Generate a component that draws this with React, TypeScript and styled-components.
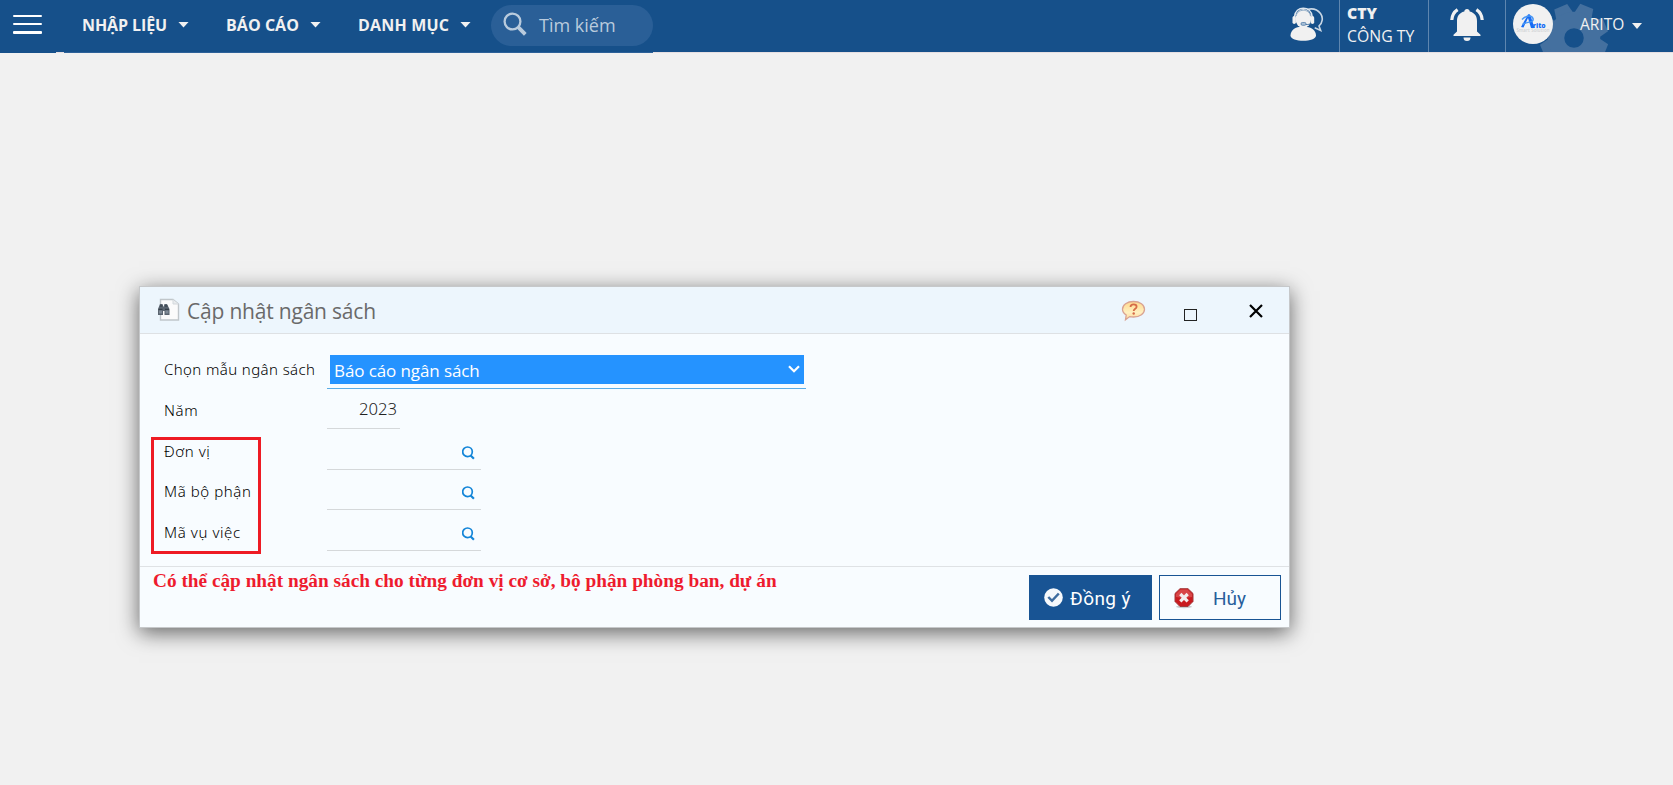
import React from "react";
import styled, { createGlobalStyle } from "styled-components";

const sans = `"Open Sans", "Noto Sans", sans-serif`;
const light = `"Noto Sans", "Open Sans", sans-serif`;

const GlobalStyle = createGlobalStyle`
  * { box-sizing: border-box; }
  body {
    margin: 0;
    background: #f1f1f1;
    font-family: ${sans};
    overflow: hidden;
  }
`;

const Page = styled.div`
  display: flex;
  flex-direction: column;
  height: 785px;
`;

const TopBar = styled.header`
  display: flex;
  height: 52px;
  flex: none;
  background: #16508a;
  color: #f1f1f1;
`;

const TopBarEdge = styled.div`
  display: flex;
  height: 1px;
  flex: none;
  background: #e6dfe2;
`;

const EdgeSegment = styled.span<{ $width: number; $color: string }>`
  width: ${(p) => p.$width}px;
  background: ${(p) => p.$color};
`;

const MenuToggle = styled.button`
  display: flex;
  flex-direction: column;
  flex: none;
  gap: 6px;
  width: 82px;
  padding: 15px 0 0 13px;
  border: 0;
  background: none;
`;

const ToggleLine = styled.span<{ $thick?: boolean }>`
  width: 29px;
  height: ${(p) => (p.$thick ? 3 : 2)}px;
  border-radius: 1px;
  background: #fff;
`;

const Nav = styled.nav`
  display: flex;
  flex: none;
  width: 409px;
`;

const NavItem = styled.a<{ $width: number; $spacing: number }>`
  display: flex;
  flex: none;
  align-items: center;
  justify-content: space-between;
  width: ${(p) => p.$width}px;
  height: 50px;
  margin-right: 37px;
  font-size: 16px;
  font-weight: 700;
  letter-spacing: ${(p) => p.$spacing}px;
  white-space: nowrap;

  &:last-child {
    margin-right: 0;
  }
`;

const Caret = styled.span`
  width: 11px;
  height: 6px;
  margin-top: -1px;
  background: #f1f1f1;
  clip-path: polygon(0 0, 100% 0, 50% 100%);
`;

const SearchPill = styled.div`
  display: flex;
  align-items: center;
  width: 162px;
  height: 41px;
  margin-top: 5px;
  padding: 0 0 2px 12px;
  gap: 12px;
  border-radius: 21px;
  background: #2a5f97;
  color: #b9cbdd;
  font-size: 18px;
  white-space: nowrap;
  line-height: 38px;
`;

const SearchIcon = styled.svg`
  flex: none;
  margin-top: -1px;
`;

const Tools = styled.div`
  display: flex;
  margin-left: auto;
`;

const ToolCell = styled.div<{ $width: number }>`
  display: flex;
  width: ${(p) => p.$width}px;
  padding-top: 7px;
  justify-content: center;
  border-right: 1px solid #5e86af;
`;

const Company = styled.div`
  width: 89px;
  padding: 2px 0 0 7px;
  border-right: 1px solid #5e86af;
  font-size: 15.8px;
  line-height: 24px;
  white-space: nowrap;
`;

const CompanyCode = styled.div`
  font-weight: 800;
  line-height: 22px;
`;

const Account = styled.div`
  position: relative;
  display: flex;
  width: 167px;
  overflow: hidden;
`;

const Avatar = styled.div`
  position: relative;
  width: 40px;
  height: 40px;
  margin: 4px 0 0 7px;
  border-radius: 50%;
  overflow: hidden;
  background: #f1f1f1;
`;

const Gear = styled.svg`
  position: absolute;
  left: 32px;
  top: 3px;
`;

const AccountName = styled.span`
  position: relative;
  width: 52px;
  margin-left: 27px;
  font-size: 15.5px;
  line-height: 49px;
`;

const AccountCaret = styled(Caret)`
  position: relative;
  width: 10px;
  margin: 23px 0 0 0;
`;

const Desktop = styled.main`
  flex: 1;
  padding: 233px 0 0 139px;
`;

const Dialog = styled.section`
  position: relative;
  display: flex;
  flex-direction: column;
  width: 1151px;
  height: 342px;
  border: 1px solid #c6c8ca;
  background: #f8fcff;
  box-shadow: 0 5px 20px rgba(0, 0, 0, 0.58);
`;

const TitleBar = styled.div`
  display: flex;
  height: 47px;
  flex: none;
  padding: 0 26px 0 17px;
  align-items: flex-start;
  border-bottom: 1px solid #dee1e4;
  background: #edf6fd;
`;

const DocIcon = styled.svg`
  margin-top: 11px;
  flex: none;
`;

const Title = styled.h1`
  flex: 1;
  margin: 0 0 0 7px;
  color: #6a6a6a;
  font-size: 21px;
  font-weight: 400;
  letter-spacing: -0.2px;
  line-height: 49px;
`;

const HelpIcon = styled.svg`
  margin: 12px 38px 0 0;
`;

const MaximizeButton = styled.button`
  width: 13px;
  height: 12px;
  margin: 22px 52px 0 0;
  padding: 0;
  border: 1px solid #222;
  background: none;
`;

const CloseIcon = styled.svg`
  margin-top: 16px;
`;

const Form = styled.div`
  height: 233px;
  flex: none;
  padding-left: 24px;
  border-bottom: 1px solid #dfe2e5;
`;

const Field = styled.div<{ $height: number }>`
  display: flex;
  align-items: flex-end;
  height: ${(p) => p.$height}px;
`;

const Label = styled.label<{ $raise?: number }>`
  width: 163px;
  padding-bottom: ${(p) => p.$raise ?? 9}px;
  color: #000;
  font-family: ${light};
  font-size: 15px;
  font-weight: 300;
  letter-spacing: ${(p) => (p.$raise ? 0.4 : 0.58)}px;
  line-height: 20px;
  white-space: nowrap;
`;

const SelectBox = styled.div`
  width: 479px;
  height: 34px;
  padding: 0 2px 0 3px;
  border-bottom: 1px solid #5aace6;
`;

const SelectValue = styled.div`
  display: flex;
  align-items: center;
  justify-content: space-between;
  height: 29px;
  padding: 2px 4px 0 4px;
  background: #2593ff;
  color: #fff;
  font-size: 17px;
  letter-spacing: -0.1px;
  line-height: 27px;
`;

const Chevron = styled.svg`
  margin-top: -4px;
`;

const YearInput = styled.div`
  width: 73px;
  height: 30px;
  padding-right: 3px;
  border-bottom: 1px solid #d5d8da;
  color: #222;
  font-family: ${light};
  font-size: 16.7px;
  font-weight: 300;
  line-height: 20px;
  text-align: right;
`;

const LookupInput = styled.div`
  display: flex;
  justify-content: flex-end;
  width: 154px;
  height: 24px;
  padding-right: 6px;
  border-bottom: 1px solid #d5d8da;
`;

const Footer = styled.footer`
  display: flex;
  justify-content: flex-end;
  gap: 7px;
  padding: 8px 8px 0 0;
`;

const ActionButton = styled.button<{ $primary?: boolean }>`
  display: flex;
  align-items: center;
  width: ${(p) => (p.$primary ? 123 : 122)}px;
  height: 45px;
  padding: 2px 0 0 14px;
  gap: ${(p) => (p.$primary ? 7 : 19)}px;
  border: 1px solid #185494;
  background: ${(p) => (p.$primary ? "#185494" : "#f8fcff")};
  color: ${(p) => (p.$primary ? "#fff" : "#285f9c")};
  font-family: Roboto, sans-serif;
  font-size: 19px;
  letter-spacing: ${(p) => (p.$primary ? 0.4 : 0)}px;

  svg {
    flex: none;
    margin-top: -1px;
  }
`;

const Highlight = styled.div`
  position: absolute;
  left: 11px;
  top: 150px;
  width: 110px;
  height: 117px;
  border: 3px solid #ee1b24;
`;

const Note = styled.div`
  position: absolute;
  left: 13px;
  top: 282px;
  color: #ee1b2e;
  font-family: "Liberation Serif", serif;
  font-size: 19.3px;
  font-weight: 700;
  line-height: 24px;
  white-space: nowrap;
`;

const Magnifier = () => (
  <svg width="13" height="14" viewBox="0 0 13 14" fill="none" stroke="#1385d8">
    <circle cx="5.500" cy="5.800" r="4.800" strokeWidth="1.700" />
    <path d="M8.400 9.200 11.900 12.700" strokeWidth="2.200" />
  </svg>
);

const lookups = [
  { label: "Đơn vị", height: 41 },
  { label: "Mã bộ phận", height: 40 },
  { label: "Mã vụ việc", height: 41 },
];

const menus = [
  { label: "NHẬP LIỆU", width: 107, spacing: -0.1 },
  { label: "BÁO CÁO", width: 95, spacing: 0.05 },
  { label: "DANH MỤC", width: 113, spacing: 0.2 },
];

const teeth = [22, 67, 112, 157, 202, 247, 292, 337];

export default function App() {
  return (
    <Page>
      <GlobalStyle />
      <TopBar>
        <MenuToggle aria-label="Menu">
          <ToggleLine />
          <ToggleLine />
          <ToggleLine $thick />
        </MenuToggle>
        <Nav>
          {menus.map((m) => (
            <NavItem key={m.label} $width={m.width} $spacing={m.spacing}>
              {m.label}
              <Caret />
            </NavItem>
          ))}
        </Nav>
        <SearchPill>
          <SearchIcon width="24" height="24" viewBox="0 0 24 24" fill="none" stroke="#b9cbdd">
            <circle cx="9.500" cy="9.500" r="7.900" strokeWidth="2.300" />
            <path d="M15.200 15.200 22.300 22.300" strokeWidth="3.800" />
          </SearchIcon>
          Tìm kiếm
        </SearchPill>
        <Tools>
          <ToolCell $width={66}>
            <svg width="34" height="36" viewBox="0 0 34 36">
              <path d="M17 2.500C22 1.200 27 2 30.500 6.500c3 4 2 9.500-1.500 12.500l1.700 4.500-6-2.700" fill="none" stroke="#c9d7e5" strokeWidth="1.600" />
              <path d="M.5 28.500C.5 23.500 5 20.500 9 20h8c4.500.5 9 3.500 9 8.500 0 7-25.500 7-25.500 0Z" fill="#f1f1f1" />
              <ellipse cx="13.300" cy="11.500" rx="7.900" ry="9.500" fill="#f1f1f1" />
              <path d="M4.500 10C5 4 9 1.300 13.300 1.300S21.800 4 22.200 10" fill="none" stroke="#dfe7ef" strokeWidth="1.600" />
              <path d="M6.200 9C6.800 5 10 3.300 13.300 3.300s6.500 1.700 7.200 5.700" fill="none" stroke="#7f9fbf" strokeWidth=".8" />
              <path d="M22 15.500c-1 1.800-3.500 2-6 2" fill="none" stroke="#42709f" strokeWidth=".9" />
              <rect x="2.500" y="9" width="3.400" height="8" rx="1.700" fill="#f1f1f1" />
              <rect x="20.800" y="9" width="3.400" height="8" rx="1.700" fill="#f1f1f1" />
              <rect x="11" y="15.500" width="5" height="2.800" rx="1.300" fill="#a9c0d7" stroke="#42709f" strokeWidth=".7" />
            </svg>
          </ToolCell>
          <Company>
            <CompanyCode>CTY</CompanyCode>
            CÔNG TY
          </Company>
          <ToolCell $width={77}>
            <svg width="34" height="35" viewBox="0 0 34 35" fill="#f1f1f1">
              <path d="M17 2c1.500 0 2.700 1 2.700 2.600C25 6 27 9.500 27 14v10.500l3.500 3.200V29h-27v-1.300L7 24.500V14c0-4.500 2-8 7.300-9.400C14.300 3 15.500 2 17 2ZM13.500 30.500h7a3.500 3.500 0 0 1-7 0Z" />
              <path d="M1.800 13C2 8.500 4 5 7.600 2.600M32.200 13C32 8.500 30 5 26.400 2.600" fill="none" stroke="#f1f1f1" strokeWidth="3.200" />
            </svg>
          </ToolCell>
          <Account>
            <Gear width="72" height="70" viewBox="-36 -35 72 70">
              {teeth.map((a) => (
                <path key={a} d="M-7-34H7L9.500-22h-19Z" transform={`rotate(${a})`} fill="#44709f" />
              ))}
              <circle r="18" fill="none" stroke="#44709f" strokeWidth="16.500" />
            </Gear>
            <Avatar>
              <svg width="40" height="40" viewBox="0 0 40 40">
                <path d="M8 23 15 10.500c1.500-.5 2.300.2 2.700 1.500L21.500 24H18L15 14 10.500 23.500Z" fill="#176cf5" />
                <path d="M9.500 20.500C15 17 21 19 20 14.500c-1-3-6-4-11 1" fill="none" stroke="#4796f4" strokeWidth="1.500" />
                <text x="19.800" y="23.800" fontFamily="Open Sans" fontWeight="800" fontSize="6.800" fill="#176cf5">rito</text>
                <text x="3.500" y="28.300" fontFamily="Open Sans" fontWeight="600" fontSize="4.400" fill="#d0d2d4" textLength="33">Smart Solution</text>
              </svg>
            </Avatar>
            <AccountName>ARITO</AccountName>
            <AccountCaret />
          </Account>
        </Tools>
      </TopBar>
      <TopBarEdge>
        <EdgeSegment $width={56} $color="#16508a" />
        <EdgeSegment $width={8} $color="#e6dfe2" />
        <EdgeSegment $width={589} $color="#2d6199" />
      </TopBarEdge>
      <Desktop>
        <Dialog>
          <TitleBar>
            <DocIcon width="23" height="24" viewBox="0 0 23 24">
              <path d="M3.500 1.500H16L21.500 6v16h-18Z" fill="#fbfbfb" stroke="#c0c6ca" strokeWidth="1.400" />
              <path d="M16 1.500V6h5.500" fill="#e9ecee" stroke="#d3d8dc" />
              <path d="M1 11 3 6h2.500l1 3 1-3H10l2.500 5v6h-5v-4H6v4H1Z" fill="#5a646f" />
              <path d="M2 12.500h3v3H2Zm6.500 0h3v3h-3Z" fill="#7f8a96" />
              <path d="M3 8h2.500M8 8h2.500M1.500 11.300h4M8 11.300h4" stroke="#2d3640" />
            </DocIcon>
            <Title>Cập nhật ngân sách</Title>
            <HelpIcon width="25" height="23" viewBox="0 0 25 23">
              <defs>
                <linearGradient id="bubble" x1="0" y1="0" x2="0" y2="1">
                  <stop offset="0" stopColor="#ffd98c" />
                  <stop offset=".6" stopColor="#fff0c0" />
                  <stop offset="1" stopColor="#ffd79a" />
                </linearGradient>
              </defs>
              <path d="M12.500 2.500C19 2.500 23.500 6 23.500 10.200S19 18 12.500 18c-1.300 0-2.600-.1-3.800-.4L4.500 20.800l.7-4.800C2.800 14.500 1.500 12.500 1.500 10.200c0-4.200 4.500-7.700 11-7.700Z" fill="url(#bubble)" stroke="#d9a392" strokeWidth="1.300" />
              <path d="M9.500 7.900c0-2 1.500-2.600 3.100-2.600s3 .8 3 2.400c0 2.200-2.900 2.100-2.900 4.400" fill="none" stroke="#d66c48" strokeWidth="1.800" />
              <circle cx="12.700" cy="14.500" r="1.200" fill="#d66c48" />
            </HelpIcon>
            <MaximizeButton aria-label="Maximize" />
            <CloseIcon width="14" height="15" viewBox="0 0 14 15" stroke="#000" strokeWidth="2.200">
              <path d="M1 2 13 14M13 2 1 14" />
            </CloseIcon>
          </TitleBar>
          <Form>
            <Field $height={55}>
              <Label $raise={10}>Chọn mẫu ngân sách</Label>
              <SelectBox>
                <SelectValue>
                  Báo cáo ngân sách
                  <Chevron width="12" height="8" viewBox="0 0 12 8" fill="none" stroke="#fff" strokeWidth="2.200">
                    <path d="M1 1.200 6 6.200 11 1.200" />
                  </Chevron>
                </SelectValue>
              </SelectBox>
            </Field>
            <Field $height={40}>
              <Label>Năm</Label>
              <YearInput>2023</YearInput>
            </Field>
            {lookups.map((f) => (
              <Field key={f.label} $height={f.height}>
                <Label>{f.label}</Label>
                <LookupInput>
                  <Magnifier />
                </LookupInput>
              </Field>
            ))}
          </Form>
          <Footer>
            <ActionButton $primary>
              <svg width="19" height="20" viewBox="0 0 19 20">
                <circle cx="9.500" cy="9.500" r="9.300" fill="#f6f9fc" />
                <path d="M4.300 9 8 12.800 14.800 5.500" fill="none" stroke="#3e6c9f" strokeWidth="2.500" />
              </svg>
              Đồng ý
            </ActionButton>
            <ActionButton>
              <svg width="20" height="21" viewBox="0 0 20 21">
                <ellipse cx="10" cy="18.700" rx="8" ry="1.500" fill="#c9cdd0" />
                <path d="M6 .7h8L19 5.500v8L14 18.500H6L1 13.500v-8Z" fill="#c91a1f" stroke="#a33a3c" />
                <path d="M6.500 1.500h7L18 6v3c-5 1-11 1-16 0V6Z" fill="#de5a5a" opacity=".7" />
                <path d="M6.300 6 13.700 13.400M13.700 6 6.300 13.400" stroke="#f3eeee" strokeWidth="3.200" />
              </svg>
              <span>Hủy</span>
            </ActionButton>
          </Footer>
          <Highlight />
          <Note>Có thể cập nhật ngân sách cho từng đơn vị cơ sở, bộ phận phòng ban, dự án</Note>
        </Dialog>
      </Desktop>
    </Page>
  );
}
